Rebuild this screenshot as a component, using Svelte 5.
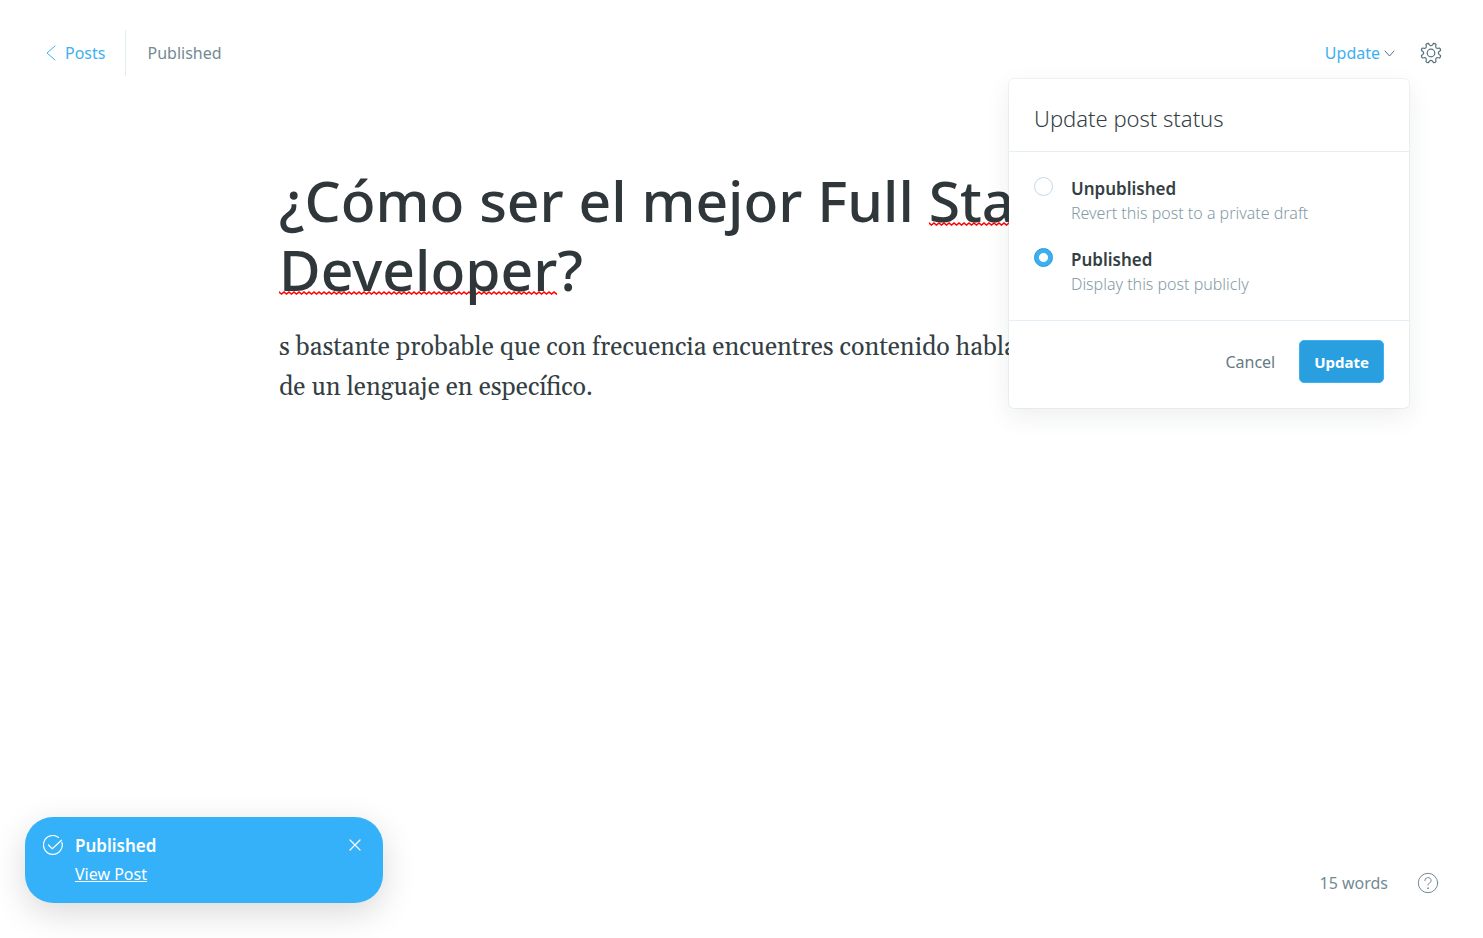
<script>
  const statuses = [
    { value: 'draft', title: 'Unpublished', note: 'Revert this post to a private draft' },
    { value: 'published', title: 'Published', note: 'Display this post publicly' }
  ];

  let status = $state('published');

  // Outline of an eight-toothed cog centred on (12, 12).
  const point = (radius, degrees) => {
    const a = (degrees * Math.PI) / 180;
    return `${(12 + radius * Math.cos(a)).toFixed(2)} ${(12 + radius * Math.sin(a)).toFixed(2)}`;
  };
  const teeth = Array.from({ length: 8 }, (_, i) => 22.5 + i * 45);
  const cog =
    teeth
      .map((t, i) =>
        `${i ? 'L' : 'M'}${point(9.9, t - 8)} Q${point(10.5, t)} ${point(9.9, t + 8)} ` +
        `L${point(8.6, t + 11)} Q${point(6.2, t + 22.5)} ${point(8.6, t + 34)}`)
      .join(' ') + 'Z';
</script>

<div class="editor">
  <header>
    <nav>
      <a class="back" href="#posts">
        <svg width="10" height="16" viewBox="0 0 10 16" aria-hidden="true"><path d="M9 1 1 8l8 7" /></svg>
        <span>Posts</span>
      </a>
      <span class="state">Published</span>
    </nav>
    <div class="actions">
      <div class="menu">
        <button class="trigger" type="button">
          Update
          <svg width="11" height="7" viewBox="0 0 11 7" aria-hidden="true"><path d="m1 1 4.500 5L10 1" /></svg>
        </button>
        <form class="popover">
          <h2>Update post status</h2>
          <div class="options">
            {#each statuses as s}
              <label>
                <input type="radio" name="status" value={s.value} bind:group={status} />
                <span class="text">
                  <strong>{s.title}</strong>
                  <small>{s.note}</small>
                </span>
              </label>
            {/each}
          </div>
          <div class="buttons">
            <button class="cancel" type="button">Cancel</button>
            <button class="save" type="button">Update</button>
          </div>
        </form>
      </div>
      <button class="icon settings" type="button" aria-label="Settings">
        <svg width="22" height="22" viewBox="1 1 22 22" aria-hidden="true"><path d={cog} /><circle cx="12" cy="12" r="3.800" /></svg>
      </button>
    </div>
  </header>

  <main>
    <h1>¿Cómo ser el mejor Full <span class="misspelt">Stack</span><br /><span class="misspelt">Developer</span>?</h1>
    <p>s bastante probable que con frecuencia encuentres contenido hablando<br />de un lenguaje en específico.</p>
  </main>

  <footer>
    <span>15 words</span>
    <button class="icon" type="button" aria-label="Help">
      <svg width="22" height="22" viewBox="0 0 22 22" aria-hidden="true">
        <circle cx="11" cy="11" r="9.700" />
        <path d="M7.800 8.600a3.200 2.900 0 1 1 4.600 2.500c-.9.400-1.400 1-1.400 2" />
        <circle cx="11" cy="16.200" r=".4" />
      </svg>
    </button>
  </footer>

  <aside class="toast">
    <svg width="20" height="20" viewBox="0 0 20 20" aria-hidden="true">
      <path d="M18.900 7.300A9.400 9.400 0 1 1 15.500 2.400" />
      <path d="m5.500 10 3.800 3.800 9.200-8.600" />
    </svg>
    <div class="message">
      <strong>Published</strong>
      <a href="#view">View Post</a>
    </div>
    <button type="button" aria-label="Close">
      <svg width="12" height="12" viewBox="0 0 12 12" aria-hidden="true"><path d="m1 1 10 10M11 1 1 11" /></svg>
    </button>
  </aside>
</div>

<style>
  :global(body) {
    margin: 0;
    background: #fff;
  }

  .editor {
    position: relative;
    display: flex;
    flex-direction: column;
    min-height: 100vh;
    box-sizing: border-box;
    font: 16px/24px 'Noto Sans', 'Open Sans', sans-serif;
    color: #343f44;
  }

  button {
    padding: 0;
    border: 0;
    background: none;
    font: inherit;
    color: inherit;
    cursor: pointer;
  }

  a {
    color: inherit;
  }

  svg {
    display: block;
    flex: none;
    fill: none;
    stroke: currentColor;
    stroke-linecap: round;
    stroke-linejoin: round;
  }

  header {
    display: flex;
    justify-content: space-between;
    padding: 30px 41px 0 46px;
  }

  nav,
  .actions {
    display: flex;
    align-items: center;
    height: 46px;
  }

  .back {
    display: flex;
    align-items: center;
    gap: 9px;
    height: 46px;
    padding-right: 20px;
    border-right: 1px solid #e3edf2;
    color: #3eb0ef;
    text-decoration: none;
  }

  .state {
    padding-left: 21px;
    color: #738a94;
  }

  .actions {
    gap: 25px;
  }

  .menu {
    position: relative;
  }

  .trigger {
    display: flex;
    align-items: center;
    gap: 4px;
    color: #3eb0ef;
  }

  .trigger svg {
    color: #55727e;
  }

  .icon {
    color: #738a94;
  }

  .settings {
    color: #54717d;
  }

  .settings svg,
  .toast svg {
    stroke-width: 1.2;
  }

  .popover {
    position: absolute;
    z-index: 2;
    top: 38px;
    right: -14px;
    width: 400px;
    border-radius: 5px;
    background: #fff;
    box-shadow: 0 0 0 1px rgba(99, 114, 130, 0.08), 0 8px 26px rgba(27, 39, 51, 0.08);
  }

  h2 {
    margin: 0;
    padding: 23px 25px 17px;
    border-bottom: 1px solid #e5eff5;
    font-size: 22px;
    line-height: 32px;
    font-weight: 300;
  }

  .options {
    display: grid;
    gap: 21px;
    padding: 24px 25px 23px;
    border-bottom: 1px solid #e5eff5;
  }

  label {
    display: flex;
    gap: 18px;
  }

  input {
    flex: none;
    appearance: none;
    width: 19px;
    height: 19px;
    margin: 1px 0 0;
    border: 1px solid #c5d9e8;
    border-radius: 50%;
    background: #fff;
  }

  input:checked {
    border-color: #1b97e3;
    background: radial-gradient(circle, #fff 4px, #3eb0ef 5px);
  }

  .text {
    display: flex;
    flex-direction: column;
  }

  .text strong {
    font-size: 17px;
    line-height: 25px;
    font-weight: 600;
  }

  .text small {
    font-size: 16px;
    line-height: 25px;
    font-weight: 300;
    color: #839aa5;
  }

  .buttons {
    display: flex;
    justify-content: flex-end;
    gap: 24px;
    padding: 19px 25px 25px;
  }

  .cancel {
    color: #667b84;
  }

  .save {
    height: 43px;
    padding: 0 14px;
    border: 1px solid #3eb0ef;
    border-radius: 5px;
    background: #2a9fe0;
    color: #fff;
    font-size: 15px;
    font-weight: 700;
  }

  main {
    flex: 1;
    width: 100%;
    max-width: 925px;
    margin: 0 auto;
    padding-top: 90px;
  }

  h1 {
    margin: 0;
    font: 500 57px/69px 'Noto Sans', 'Open Sans', sans-serif;
    color: #2f373b;
    white-space: nowrap;
  }

  .misspelt {
    background: url("data:image/svg+xml,%3Csvg xmlns='http://www.w3.org/2000/svg' width='5' height='4'%3E%3Cpath d='M-2.500 3 0 1l2.500 2L5 1l2.500 2' fill='none' stroke='red' stroke-width='1.400'/%3E%3C/svg%3E") repeat-x left bottom 13px;
  }

  p {
    margin: 24px 0 0;
    font: 25px/40px Gelasio, 'Liberation Serif', serif;
    white-space: nowrap;
  }

  footer {
    display: flex;
    align-items: center;
    justify-content: flex-end;
    gap: 29px;
    padding: 0 44px 43px;
    color: #738a94;
  }

  .toast {
    position: absolute;
    left: 25px;
    bottom: 35px;
    display: flex;
    gap: 12px;
    width: 358px;
    box-sizing: border-box;
    padding: 16px 22px 16px 18px;
    border-radius: 28px;
    background: #35b1f9;
    box-shadow: 0 10px 34px rgba(0, 0, 0, 0.15);
    color: #fff;
  }

  .toast > svg {
    margin-top: 2px;
  }

  .message {
    display: flex;
    flex: 1;
    flex-direction: column;
    align-items: flex-start;
    gap: 4px;
  }

  .message strong {
    font-size: 17px;
    line-height: 25px;
    font-weight: 600;
  }

  .message a {
    line-height: 25px;
  }

  .toast button {
    align-self: flex-start;
    margin-top: 6px;
  }
</style>
